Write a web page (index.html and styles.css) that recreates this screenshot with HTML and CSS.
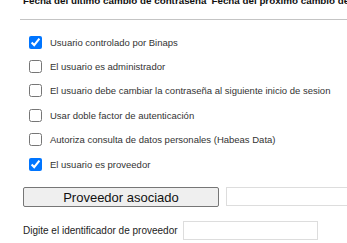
FILE: index.html
```html
<!DOCTYPE html>
<html lang="es">
  <head>
    <meta charset="UTF-8" />
    <meta name="viewport" content="width=device-width, initial-scale=1.0" />
    <title>Usuario</title>
    <link rel="stylesheet" href="styles.css">
  </head>
  <body>
    <div class="container">
      <div class="date-header">
        <span>Fecha del último cambio de contraseña</span>
        <span>Fecha del próximo cambio de contraseña</span>
      </div>
      <hr class="divider" />

      <div class="options">
        <label class="check-row"><input type="checkbox" checked /> Usuario controlado por Binaps</label>
        <label class="check-row"><input type="checkbox" /> El usuario es administrador</label>
        <label class="check-row"><input type="checkbox" /> El usuario debe cambiar la contraseña al siguiente inicio de sesion</label>
        <label class="check-row"><input type="checkbox" /> Usar doble factor de autenticación</label>
        <label class="check-row"><input type="checkbox" /> Autoriza consulta de datos personales (Habeas Data)</label>
        <label class="check-row"><input type="checkbox" checked /> El usuario es proveedor</label>
      </div>

      <div class="provider-row">
        <button class="provider-button">Proveedor asociado</button>
        <input type="text" class="provider-name" />
      </div>

      <div class="provider-id">
        <label for="provider-id">Digite el identificador de proveedor</label>
        <input type="text" id="provider-id" class="provider-id-input" />
      </div>
    </div>
  </body>
</html>
```

FILE: styles.css
```css
:root {
  --text-color: #333;
  --border-color: #ddd;
}

body {
  font-family: 'Liberation Sans', Arial, sans-serif;
  color: var(--text-color);
  background-color: white;
  margin: 0;
  overflow: hidden;
}

.container {
  padding-left: 20px;
  overflow: hidden;
}

.date-header {
  display: flex;
  gap: 5px;
  margin-top: -4px;
  padding-left: 3px;
  font-size: 9.8px;
  font-weight: bold;
  line-height: 10px;
  color: #111;
  white-space: nowrap;
}

.divider {
  border: none;
  border-top: 1px solid #c4c4c4;
  margin: 13px 0 10px 0;
}

.options {
  display: flex;
  flex-direction: column;
}

.check-row {
  display: flex;
  align-items: center;
  gap: 8px;
  height: 24.4px;
  padding-left: 9px;
  font-size: 9.5px;
  white-space: nowrap;
}

.check-row input {
  margin: 0;
  width: 13px;
  height: 13px;
}

.provider-row {
  display: flex;
  gap: 7px;
  margin-top: 11px;
  padding-left: 3px;
}

.provider-button {
  flex-shrink: 0;
  width: 196px;
  height: 20px;
  padding: 0;
  font-family: 'Liberation Sans', Arial, sans-serif;
  font-size: 13px;
  color: #111;
  background-color: #efefef;
  border: 1px solid #767676;
  border-radius: 2px;
}

.provider-name {
  flex-shrink: 0;
  width: 150px;
  height: 19px;
  box-sizing: border-box;
  border: 1px solid var(--border-color);
  padding: 0 4px;
}

.provider-id {
  display: flex;
  align-items: center;
  gap: 5px;
  margin-top: 14px;
  padding-left: 3px;
  font-size: 10px;
  color: #222;
}

.provider-id-input {
  width: 135px;
  height: 19px;
  box-sizing: border-box;
  border: 1px solid var(--border-color);
  padding: 0 4px;
}
```
